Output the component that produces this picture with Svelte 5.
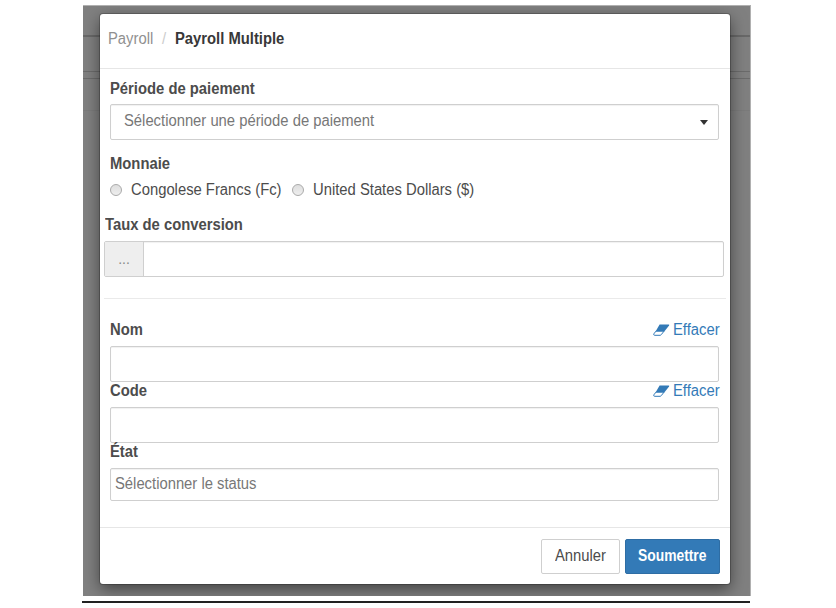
<script>
  let currency = $state('');
  let period = $state('');
  let rate = $state('');
  let name = $state('');
  let code = $state('');
  const currencies = [
    { id: 'fc', label: 'Congolese Francs (Fc)' },
    { id: 'usd', label: 'United States Dollars ($)' }
  ];
</script>

{#snippet clearLink(reset)}
  <button class="clear" type="button" onclick={reset}>
    <svg width="17" height="12" viewBox="0 0 17 12" aria-hidden="true">
      <path class="solid" d="M6.6.5H15.6Q16.7.5 16.1 1.6L11.1 7.7H2.4Z" />
      <path class="outline" d="M2.9 7.2L.9 9.8Q.3 11.2 1.5 11.3H7Q7.7 11.3 8.3 10.6L11 7.2Z" />
    </svg>
    <span class="t">Effacer</span>
  </button>
{/snippet}

<main>
  <div class="backdrop">
    <form class="modal" onsubmit={(e) => e.preventDefault()}>
      <header>
        <span class="t"><span class="parent">Payroll</span><span class="slash">/</span><b>Payroll Multiple</b></span>
      </header>
      <section class="body">
        <div class="label first"><b class="t">Période de paiement</b></div>
        <button type="button" class="field select" onclick={() => (period = '')}>
          <span class="t">Sélectionner une période de paiement</span>
          <i class="caret"></i>
        </button>
        <div class="label money"><b class="t">Monnaie</b></div>
        <div class="radios">
          {#each currencies as item (item.id)}
            <label class={item.id}>
              <input type="radio" name="currency" value={item.id} bind:group={currency} />
              <span class="t">{item.label}</span>
            </label>
          {/each}
        </div>
        <div class="wide">
          <div class="label rate"><b class="t">Taux de conversion</b></div>
          <div class="group">
            <span class="addon">...</span>
            <input aria-label="Taux de conversion" bind:value={rate} />
          </div>
          <hr />
        </div>
        <div class="label name"><b class="t">Nom</b>{@render clearLink(() => (name = ''))}</div>
        <input class="field" aria-label="Nom" bind:value={name} />
        <div class="label tight"><b class="t">Code</b>{@render clearLink(() => (code = ''))}</div>
        <input class="field" aria-label="Code" bind:value={code} />
        <div class="label tight state"><b class="t">État</b></div>
        <div class="field status"><span class="t">Sélectionner le status</span></div>
      </section>
      <footer>
        <button type="button" class="btn"><span class="t">Annuler</span></button>
        <button type="submit" class="btn primary"><b class="t">Soumettre</b></button>
      </footer>
    </form>
  </div>
  <div class="rule"></div>
</main>

<style>
  :global(body) { background: #fff; }
  main {
    box-sizing: border-box;
    width: 836px;
    height: 608px;
    padding: 5px 85px 0 83px;
    overflow: hidden;
    font: 16px/20px "Liberation Sans", Arial, sans-serif;
    color: #4c4c4c;
  }
  * { box-sizing: border-box; }
  button, input { font: inherit; color: inherit; margin: 0; outline: none; }
  .backdrop {
    height: 591px;
    padding: 8px 20px 12px 17px;
    overflow: hidden;
    border-top: 1px solid #b0b0b0;
    border-right: 1px solid #b0b0b0;
    background:
      linear-gradient(#686868, #686868) 0 29px / 100% 2px no-repeat,
      linear-gradient(#6b6b6b, #6b6b6b) 0 65px / 100% 1px no-repeat,
      linear-gradient(#6b6b6b, #6b6b6b) 0 72px / 100% 1px no-repeat,
      linear-gradient(#7b7b7b, #7b7b7b) 0 104px / 100% 1px no-repeat,
      #808080;
  }
  .modal {
    width: 630px;
    height: 570px;
    display: flex;
    flex-direction: column;
    background: #fff;
    border-radius: 3px;
    box-shadow: 0 0 0 1px rgba(0, 0, 0, .2), 0 5px 16px rgba(0, 0, 0, .5);
  }
  .t {
    display: inline-block;
    white-space: nowrap;
    transform: scaleX(.925);
    transform-origin: left center;
  }
  header {
    flex: none;
    height: 55px;
    padding: 15px 8px 0;
    border-bottom: 1px solid #e6e6e6;
  }
  .parent { color: #909090; }
  .slash { color: #ccc; margin: 0 9.5px; }
  header b { color: #383838; }
  .body { flex: none; height: 458px; padding: 9px 11px 0 10px; }
  .label { height: 20px; display: flex; justify-content: space-between; }
  .first { padding-top: 1px; }
  .field {
    display: block;
    width: 100%;
    height: 36px;
    padding: 0 5px;
    border: 1px solid #cfcfcf;
    border-radius: 2px;
    background: #fff;
    box-shadow: inset 0 1px 1px rgba(0, 0, 0, .06);
  }
  .select {
    display: flex;
    align-items: center;
    justify-content: space-between;
    margin-top: 6px;
    padding: 0 10px 3px 13px;
    color: #777;
  }
  .caret {
    margin-top: 4px;
    border: 4px solid transparent;
    border-top: 5px solid #333;
    border-bottom: 0;
  }
  .money { margin-top: 13px; padding-top: 1px; }
  .radios { display: flex; height: 20px; margin-top: 6px; padding-top: 1px; }
  .radios label { display: flex; }
  .fc { width: 182px; }
  .radios input {
    appearance: none;
    flex: none;
    width: 12px;
    height: 12px;
    margin: 4px 9px 0 0;
    border: 1px solid #aaa;
    border-radius: 50%;
    background: linear-gradient(#dedede, #eee);
  }
  .radios input:checked { background: radial-gradient(#444 35%, #e8e8e8 40%); }
  .wide { margin: 15px -5px 0 -6px; }
  .rate { padding: 1px 0 0 1px; }
  .group {
    display: flex;
    height: 36px;
    margin-top: 7px;
    border: 1px solid #cfcfcf;
    border-radius: 2px;
    box-shadow: inset 0 1px 1px rgba(0, 0, 0, .06);
  }
  .addon {
    width: 39px;
    padding-top: 7px;
    border-right: 1px solid #cfcfcf;
    background: #eee;
    text-align: center;
    font-size: 14px;
    color: #888;
  }
  .group input { flex: 1; border: 0; background: none; }
  hr { height: 1px; margin: 21px -2px 0 0; border: 0; background: #eaeaea; }
  .name { margin-top: 21px; margin-bottom: 6px; }
  .tight { margin-top: -1px; margin-bottom: 6px; }
  .state { margin-bottom: 6px; }
  .clear {
    display: flex;
    width: 66px;
    height: 20px;
    padding: 0;
    gap: 3px;
    border: 0;
    background: none;
    color: #337ab7;
  }
  .clear svg { flex: none; margin-top: 4px; }
  .solid { fill: currentColor; }
  .outline { fill: #fff; stroke: currentColor; stroke-width: 1; }
  .status { height: 33px; padding: 5px 4px; color: #777; }
  footer {
    display: flex;
    justify-content: flex-end;
    gap: 5px;
    height: 57px;
    padding: 11px 10px 0;
    border-top: 1px solid #e6e6e6;
  }
  .btn {
    width: 79px;
    height: 35px;
    padding: 0 0 2px 13px;
    border: 1px solid #cfcfcf;
    border-radius: 2px;
    background: #fff;
    text-align: left;
  }
  .primary { width: 95px; padding-left: 12px; color: #fff; background: #337ab7; border-color: #2e6da4; }
  .primary .t { transform: scaleX(.865); }
  .rule { width: 668px; height: 2px; margin: 5px 0 0 -1px; background: #222; }
</style>
